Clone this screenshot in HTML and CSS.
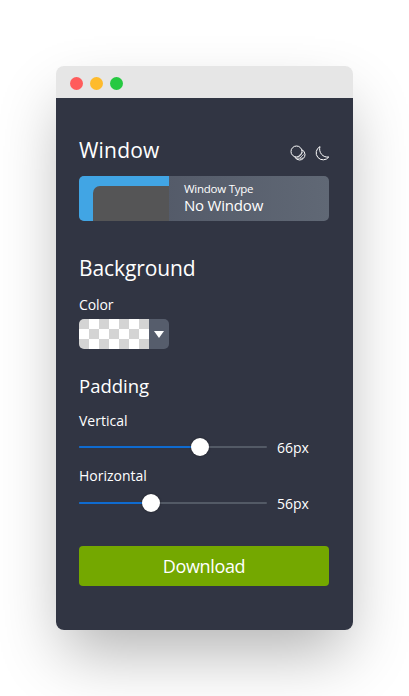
FILE: index.html
```html
<!DOCTYPE html>
<html lang="en">
<head>
<meta charset="utf-8">
<title>Window</title>
<link rel="stylesheet" href="styles.css">
</head>
<body>
<main class="window">
  <header class="titlebar">
    <span class="dot dot-red"></span>
    <span class="dot dot-yellow"></span>
    <span class="dot dot-green"></span>
  </header>
  <div class="content">
    <div class="head-row">
      <h2 class="title">Window</h2>
      <div class="icons">
        <svg class="icon" width="16" height="16" viewBox="0 0 16 16" fill="none" stroke="#fff" stroke-width="1">
          <circle cx="6.5" cy="6.5" r="5.5"/>
          <path d="M11.6 4.6A5.4 5.4 0 0 1 15 9.5 5.5 5.5 0 0 1 9.5 15 5.4 5.4 0 0 1 4.6 11.6"/>
          <path d="M7.5 12.2l4.9-4.9M9.8 13.2l3.8-3.8M6 13.2h7" stroke-width=".7"/>
        </svg>
        <svg class="icon" width="16" height="16" viewBox="0 0 16 16" fill="none" stroke="#fff" stroke-width="1">
          <path d="M6 1.6A7 7 0 1 0 14.8 12 8 8 0 0 1 6 1.6z"/>
        </svg>
      </div>
    </div>
    <div class="type-card">
      <div class="preview"><div class="preview-inner"></div></div>
      <div class="type-text">
        <span class="type-label">Window Type</span>
        <span class="type-value">No Window</span>
      </div>
    </div>

    <h2 class="title bg-title">Background</h2>
    <div class="label color-label">Color</div>
    <div class="swatch">
      <div class="checker"></div>
      <div class="caret"><span class="tri"></span></div>
    </div>

    <h3 class="subtitle">Padding</h3>
    <div class="label vertical-label">Vertical</div>
    <div class="slider-row">
      <div class="track">
        <div class="fill fill-v"></div>
        <div class="thumb"></div>
      </div>
      <span class="value">66px</span>
    </div>
    <div class="label horizontal-label">Horizontal</div>
    <div class="slider-row">
      <div class="track">
        <div class="fill fill-h"></div>
        <div class="thumb"></div>
      </div>
      <span class="value">56px</span>
    </div>

    <button class="download">Download</button>
  </div>
</main>
</body>
</html>
```
FILE: styles.css
```css
* { box-sizing: border-box; }
html, body { margin: 0; height: 100%; background: #fff; overflow: hidden; }
body {
  padding: 66px 56px 0;
  font-family: "Open Sans", "Noto Sans", sans-serif;
  color: #fff;
}
.window {
  width: 297px;
  height: 564px;
  border-radius: 8px;
  box-shadow: 0 30px 60px -8px rgba(0,0,0,.3);
  display: flex;
  flex-direction: column;
}
.titlebar {
  height: 32px;
  flex: none;
  background: #e6e6e6;
  border-radius: 8px 8px 0 0;
  display: flex;
  align-items: center;
  gap: 7px;
  padding: 2px 14px 0 13.5px;
}
.dot { width: 13px; height: 13px; border-radius: 50%; }
.dot-red { background: #ff5c5c; }
.dot-yellow { background: #febb2c; }
.dot-green { background: #26c941; }
.content {
  flex: 1;
  background: #313543;
  border-radius: 0 0 8px 8px;
  padding: 36px 24px 0 23px;
}
.head-row { display: flex; justify-content: space-between; align-items: flex-end; height: 32px; margin-bottom: 10px; }
.title { margin: 0; font-weight: 400; font-size: 21px; line-height: 32px; }
.head-row .title { letter-spacing: .2px; }
.bg-title { letter-spacing: -.1px; }
.icons { display: flex; gap: 8px; margin-bottom: 5px; margin-right: -1px; }
.type-card {
  height: 45px;
  border-radius: 5px;
  overflow: hidden;
  display: flex;
  background: linear-gradient(90deg, #4e5463, #606875);
}
.preview {
  width: 90px;
  background: #41a5e4;
  padding: 10px 0 0 14px;
}
.preview-inner {
  height: 35px;
  background: #555556;
  border-radius: 7px 0 0 0;
}
.type-text { display: flex; flex-direction: column; padding: 5px 0 0 15px; }
.type-label { font-size: 11.5px; line-height: 15px; letter-spacing: -.25px; }
.type-value { font-size: 15px; line-height: 18px; letter-spacing: -.2px; }
.bg-title { margin-top: 31px; }
.label { font-size: 14px; line-height: 20px; }
.color-label { margin-top: 11px; letter-spacing: -.1px; }
.swatch { margin-top: 4px; width: 90px; height: 30px; border-radius: 5px; overflow: hidden; display: flex; }
.checker {
  width: 70px;
  background: repeating-conic-gradient(#d4d4d4 0 25%, #fff 0 50%) 10px 0 / 20px 20px;
}
.caret { flex: 1; background: #565d6c; display: flex; align-items: center; justify-content: center; }
.tri { width: 0; height: 0; border-left: 5px solid transparent; border-right: 5px solid transparent; border-top: 7px solid #fff; }
.subtitle { margin: 22px 0 0; font-weight: 400; font-size: 18.5px; line-height: 30px; }
.vertical-label { margin-top: 10px; }
.horizontal-label { margin-top: 3px; }
.slider-row { display: flex; align-items: center; gap: 10px; height: 32px; }
.horizontal-label + .slider-row { margin-top: 1px; }
.track { position: relative; width: 188px; height: 2px; background: #535a66; border-radius: 1px; }
.fill { height: 2px; background: #0f6bd0; border-radius: 1px; }
.fill-v { width: 121px; }
.fill-h { width: 72px; }
.thumb {
  position: absolute; top: -8px; width: 18px; height: 18px;
  border-radius: 50%; background: #fff;
  box-shadow: 0 0 2px rgba(0,0,0,.5);
}
.fill-v + .thumb { left: 112px; }
.fill-h + .thumb { left: 63px; }
.value { font-size: 14px; }
.download {
  display: block;
  width: 100%;
  height: 40px;
  margin-top: 27px;
  border: 0;
  border-radius: 4px;
  background: #74a800;
  color: #fff;
  font: inherit;
  font-size: 18px;
  letter-spacing: -.35px;
}
```
